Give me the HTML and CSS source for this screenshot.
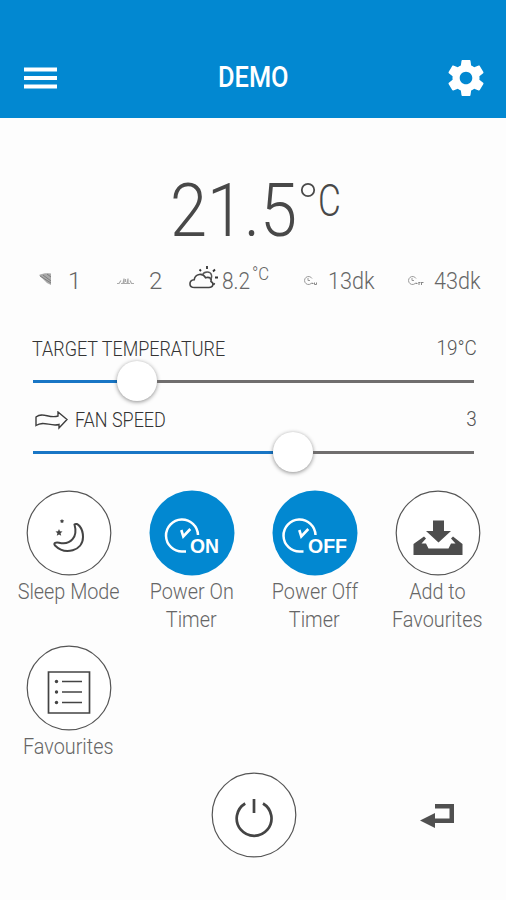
FILE: index.html
```html
<!DOCTYPE html>
<html lang="en">
<head>
<meta charset="utf-8">
<title>Demo</title>
<link rel="stylesheet" href="styles.css">
</head>
<body>
<header class="bar">
  <svg class="menu" viewBox="0 0 33 22"><path d="M0 2.4h33M0 11h33M0 19.6h33" stroke="#fff" stroke-width="4"/></svg>
  <h1 class="fit title">DEMO</h1>
  <svg class="gear" viewBox="2 2 20 20"><path fill="#fff" d="M19.43 12.98c.04-.32.07-.64.07-.98s-.03-.66-.07-.98l2.11-1.65c.19-.15.24-.42.12-.64l-2-3.46c-.12-.22-.39-.3-.61-.22l-2.49 1c-.52-.4-1.08-.73-1.69-.98l-.38-2.65C14.46 2.18 14.25 2 14 2h-4c-.25 0-.46.18-.49.42l-.38 2.65c-.61.25-1.17.59-1.69.98l-2.49-1c-.23-.09-.49 0-.61.22l-2 3.46c-.13.22-.07.49.12.64l2.11 1.65c-.04.32-.07.65-.07.98s.03.66.07.98l-2.11 1.65c-.19.15-.24.42-.12.64l2 3.46c.12.22.39.3.61.22l2.49-1c.52.4 1.08.73 1.69.98l.38 2.65c.03.24.24.42.49.42h4c.25 0 .46-.18.49-.42l.38-2.65c.61-.25 1.17-.59 1.69-.98l2.49 1c.23.09.49 0 .61-.22l2-3.46c.12-.22.07-.49-.12-.64l-2.11-1.65zM12 15.5c-1.93 0-3.5-1.57-3.5-3.5s1.57-3.5 3.5-3.5 3.5 1.57 3.5 3.5-1.57 3.5-3.5 3.5z"/></svg>
</header>
<main>
  <section class="reading">
    <span class="fit degrees">21.5</span>
    <svg class="ring" viewBox="0 0 16 16"><circle cx="8" cy="8" r="6.2" fill="none" stroke="#4a4a4a" stroke-width="1.8"/></svg>
    <span class="fit unit">C</span>
  </section>

  <section class="stats">
    <div class="stat s1">
      <svg width="14" height="14" viewBox="0 0 14 14"><path d="M0 2C4 0 8 0 12 .5V12L8 10Z" fill="#aaa"/><path d="m1 3 11 7M4 2l8 6M8 1l4 3" stroke="#777" stroke-width=".9"/></svg>
      <span class="fit">1</span>
    </div>
    <div class="stat s2">
      <svg width="17" height="10" viewBox="0 0 17 10"><path d="M0 7.500h2l2-3M4 7.500h2l1-5v5h3l1-5v5h2M13 4.500l1.500 3H17M8.500 3v3" fill="none" stroke="#aaa" stroke-width="1.200"/></svg>
      <span class="fit">2</span>
    </div>
    <div class="stat s3">
      <svg width="31" height="26" viewBox="0 0 31 26"><path d="M5.500 22.500c-6 0-6-7-.3-7.700C6 8.600 14 7.500 16.500 12.700 21 11.500 23 14 22 16.500c3.500 2 2 6-2 6Z" fill="none" stroke="#444" stroke-width="1.600"/><path d="M13.500 10c1.500-4 8-4 9 0 .5 2.500 0 4-1.500 5" fill="none" stroke="#555" stroke-width="1.400"/><path d="M18 1v3M10.500 4.500l1.500 1.500M24 6.500l2-2M26 12.500h3M24.500 18.500l1.200 1" stroke="#333" stroke-width="1.800"/></svg>
      <span class="fit">8.2</span><sup class="fit">°C</sup>
    </div>
    <div class="stat s4">
      <svg width="15" height="11" viewBox="0 0 15 11"><path d="M9 7.500A4 4 0 1 1 9 3.500M5 3v2.500h2" fill="none" stroke="#999"/><path d="M8.500 8.500h2m1-1v2h2v-2" fill="none" stroke="#888"/></svg>
      <span class="fit">13dk</span>
    </div>
    <div class="stat s5">
      <svg width="17" height="11" viewBox="0 0 17 11"><path d="M9 7.500A4 4 0 1 1 9 3.500M5 3v2.500h2" fill="none" stroke="#999"/><path d="M8.500 8.500h2m1-1h2m1 0h2M12 7v3m2.500-3v3" fill="none" stroke="#888"/></svg>
      <span class="fit">43dk</span>
    </div>
  </section>

  <section class="control">
    <div class="caption"><span class="fit target">TARGET TEMPERATURE</span><span class="fit value">19°C</span></div>
    <div class="slider temp"><i class="done"></i><b class="knob"></b><i class="rest"></i></div>
  </section>
  <section class="control">
    <div class="caption">
      <svg class="flow" width="33" height="20" viewBox="0 0 33 20"><path d="M1 6C8 .5 14 8 23 5V1l9 7.500-8 8.500v-3.500C15 16 9 9 1 14.500Z" fill="none" stroke="#3d3d3d" stroke-width="1.400"/></svg>
      <span class="fit target">FAN SPEED</span><span class="fit value">3</span>
    </div>
    <div class="slider speed"><i class="done"></i><b class="knob"></b><i class="rest"></i></div>
  </section>

  <section class="actions">
    <div class="action">
      <svg class="disc" viewBox="0 0 86 86"><circle cx="43" cy="43" r="41.800"/><path d="M48.500 34.500c2.500-2.500 8.500 3 8.500 12.500 0 14-18 18.500-28 8.500-2-2.500 1-3.500 4-2.800 12 2.800 19-6 15.500-18.200Z" fill="none" stroke="#444" stroke-width="2"/><path d="m33 39 1 2.300 2.500.2-1.900 1.700.6 2.500-2.200-1.300-2.200 1.300.6-2.500-1.900-1.700 2.500-.2ZM36 29l.8 1.200 1.400.3-1 1.200v1.300l-1.200-.5-1.200.5v-1.300l-1-1.200 1.400-.3Z" fill="#444"/></svg>
      <span class="fit">Sleep Mode</span>
    </div>
    <div class="action">
      <svg class="disc on" viewBox="0 0 86 86"><circle cx="43" cy="43" r="42.500"/><path d="M37 61.500h-3.500A16 16 0 1 1 49 45" fill="none" stroke="#fff" stroke-width="2.500"/><path d="m32.300 40 2 6.500 7-7.500" fill="none" stroke="#fff" stroke-width="2.600"/><text x="41" y="62.800" textLength="29" lengthAdjust="spacingAndGlyphs">ON</text></svg>
      <span class="fit">Power On</span><span class="fit">Timer</span>
    </div>
    <div class="action">
      <svg class="disc on" viewBox="0 0 86 86"><circle cx="43" cy="43" r="42.500"/><path d="M31.500 61.500H28A16 16 0 1 1 43.500 45" fill="none" stroke="#fff" stroke-width="2.500"/><path d="m27.300 40 2 6.500 7-7.500" fill="none" stroke="#fff" stroke-width="2.600"/><text x="36" y="62.800" textLength="39" lengthAdjust="spacingAndGlyphs">OFF</text></svg>
      <span class="fit">Power Off</span><span class="fit">Timer</span>
    </div>
    <div class="action">
      <svg class="disc" viewBox="0 0 86 86"><circle cx="43" cy="43" r="41.800"/><path d="M38 30.500h11V41h7L43.500 52.500 31 41h7ZM18.500 54 29 46.500l2 2-4.500 5H31l2.500 5h20l2.500-5h4.500L56 48.500l2-2L67.500 54V65h-49Z" fill="#4d4d4d"/></svg>
      <span class="fit">Add to</span><span class="fit">Favourites</span>
    </div>
    <div class="action">
      <svg class="disc" viewBox="0 0 86 86"><circle cx="43" cy="43" r="41.800"/><path d="M22.500 27h41v41h-41Z" fill="none" stroke="#444" stroke-width="1.700"/><path d="M36 36.500h20M36 47h20M36 57.500h20" stroke="#444" stroke-width="1.700"/><g fill="#444"><circle cx="30.500" cy="36.500" r="1.700"/><circle cx="30.500" cy="47" r="1.700"/><circle cx="30.500" cy="57.500" r="1.700"/></g></svg>
      <span class="fit">Favourites</span>
    </div>
  </section>
</main>
<footer class="foot">
  <svg class="power disc" viewBox="0 0 86 86"><circle cx="43" cy="43" r="41.800"/><path d="M34.200 31.500a17.400 17.400 0 1 0 17.800 0M43 27v14" fill="none" stroke="#444" stroke-width="2.700"/></svg>
  <svg class="back" viewBox="0 0 36 26"><path d="M16 1h19v19H16v5L1 17.500 16 10v5.500h14.500V5.500H16Z" fill="#505050"/></svg>
</footer>
</body>
</html>
```
FILE: styles.css
```css
* { box-sizing: border-box; }
body {
  margin: 0;
  height: 900px;
  overflow: hidden;
  background: #fdfdfd;
  color: #555;
  font-family: Roboto, "Noto Sans", sans-serif;
  font-weight: 300;
}
svg { display: block; flex: none; }
.fit { display: block; white-space: nowrap; line-height: 1; transform-origin: 0 50%; }

.bar {
  height: 118px;
  padding: 60px 22px 0 24px;
  display: flex;
  justify-content: space-between;
  background: #0288d1;
}
.menu { width: 33px; height: 22px; margin-top: 6.500px; }
.gear { width: 36px; height: 36px; }
.title { margin: 3px 0 0; width: 70px; font-size: 29.500px; font-weight: 500; color: #fff; transform: scaleX(.86); }

.reading { display: flex; height: 134px; padding: 55px 0 0 170px; color: #484848; }
.degrees { width: 130px; font-size: 75px; transform: scaleX(.89); }
.ring { width: 16px; height: 16px; margin-top: 9px; }
.unit { font-size: 45px; margin: 5px 0 0 2px; transform: scaleX(.78); }

.stats { display: flex; height: 78px; font-size: 24px; color: #666; }
.stat { display: flex; padding-top: 17px; }
.s1 { width: 117px; padding-left: 39px; }
.s1 svg { margin: 4px 15px 0 0; }
.s2 { width: 72px; }
.s2 svg { margin: 7px 15px 0 0; }
.s3 { width: 114px; padding-top: 13px; }
.s3 svg { margin-right: 2px; }
.s3 .fit { margin-top: 4px; width: 30px; transform: scaleX(.87); }
.s3 sup.fit { font-size: 18px; margin-top: 0; transform: scaleX(.93); }
.s4 { width: 104px; }
.s4 svg, .s5 svg { margin: 6px 10px 0 0; }
.s4 .fit, .s5 .fit { transform: scaleX(.9); }

.control { height: 71px; padding: 0 32px; color: #333; }
.caption { display: flex; align-items: flex-start; height: 40px; padding-top: 9px; font-size: 21px; }
.target { transform: scaleX(.855); }
.flow { margin: 1px 7px 0 3px; }
.value { margin: -1px -3px 0 auto; color: #555; transform: scaleX(.9); transform-origin: 100% 50%; }
.slider { display: flex; align-items: center; height: 22px; margin: 0 0 0 1px; }
.done { height: 3px; background: #1976c5; }
.rest { height: 3px; background: #706e6e; flex: 1; }
.temp .done { width: 84px; }
.speed .done { width: 240px; }
.knob { width: 40px; height: 40px; border-radius: 50%; background: #fff; box-shadow: 0 1px 4px rgba(0,0,0,.45); }

.actions { display: grid; grid-template-columns: repeat(4, 123px); grid-template-rows: 155px 127px; padding: 18px 0 0 7px; }
.action { display: flex; flex-direction: column; align-items: center; font-size: 22px; color: #666; }
.action .fit { height: 28px; line-height: 31px; transform: scaleX(.9); transform-origin: 50% 50%; }
.disc { width: 86px; height: 86px; flex: none; }
.disc > circle { fill: #fff; stroke: #555; stroke-width: 1.200; }
.disc.on > circle { fill: #0288d1; stroke: none; }
.disc text { font: bold 20.500px "Liberation Sans", sans-serif; fill: #fff; }

.foot { display: flex; padding: 0 0 0 210.500px; }
.back { width: 36px; height: 26px; margin: 31px 0 0 122px; }
```
